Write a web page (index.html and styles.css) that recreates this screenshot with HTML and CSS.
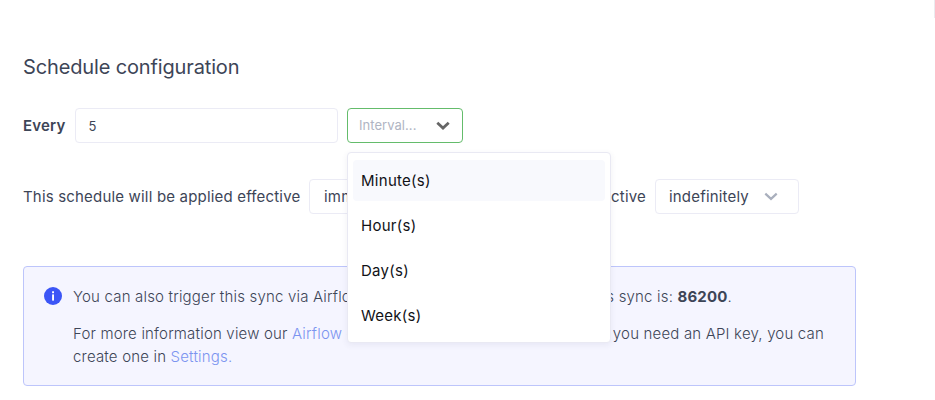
FILE: index.html
```html
<!DOCTYPE html>
<html lang="en">
<head>
    <meta charset="UTF-8">
    <meta name="viewport" content="width=device-width, initial-scale=1.0">
    <title>Schedule configuration</title>
    <link rel="stylesheet" href="styles.css">
</head>
<body>
    <div class="page-edge"></div>
    <main class="schedule">
        <h2 class="title">Schedule configuration</h2>

        <form class="row interval-row">
            <label class="every" for="every">Every</label>
            <input class="number-input" type="text" id="every" value="5">
            <div class="interval">
                <div class="select interval-select">
                    <span class="placeholder">Interval...</span>
                    <svg class="chevron" width="14" height="9" viewBox="0 0 14 9"><path d="M1.3 1.8 L7 7 L12.7 1.8" /></svg>
                </div>
                <!-- Opened dropdown -->
                <ul class="menu">
                    <li class="option active">Minute(s)</li>
                    <li class="option">Hour(s)</li>
                    <li class="option">Day(s)</li>
                    <li class="option">Week(s)</li>
                </ul>
            </div>
        </form>

        <div class="row effective-row">
            <span class="effective-text">This schedule will be applied effective</span>
            <div class="select effective-select">
                <span>immediately</span>
                <svg class="chevron" width="14" height="9" viewBox="0 0 14 9"><path d="M1.3 1.6 L7 6.9 L12.7 1.6" /></svg>
            </div>
            <span class="active-text">and will be active</span>
            <div class="select until-select">
                <span>indefinitely</span>
                <svg class="chevron" width="14" height="9" viewBox="0 0 14 9"><path d="M1.3 1.6 L7 6.9 L12.7 1.6" /></svg>
            </div>
        </div>

        <div class="callout">
            <svg class="info-icon" width="18" height="18" viewBox="0 0 18 18">
                <circle cx="9" cy="9" r="9" />
                <rect x="8.1" y="4.3" width="1.9" height="1.9" />
                <rect x="8.1" y="7.4" width="1.9" height="6.2" />
            </svg>
            <div class="callout-text">
                <p class="line first"><span>You can also trigger this sync via Airflow. The ID for</span><span>this sync is: <b>86200</b>.</span></p>
                <p class="line"><span>For more information view our <a href="#">Airflow docs</a>. If</span><span>you need an API key, you can</span></p>
                <p class="line last">create one in <a href="#">Settings.</a></p>
            </div>
        </div>
    </main>
</body>
</html>
```
FILE: styles.css
```css
* {
    box-sizing: border-box;
}

body {
    margin: 0;
    background-color: #fff;
    color: #3d4557;
    font-family: Inter, "Liberation Sans", sans-serif;
    font-size: 15px;
    letter-spacing: 0.18px;
}

/* Thin border of the panel on the right */
.page-edge {
    position: absolute;
    top: 0;
    right: 0;
    width: 1px;
    height: 18px;
    background-color: #ebebef;
}

.schedule {
    width: 856px;
    padding: 54px 0 0 23px;
}

.title {
    margin: 0;
    font-size: 20px;
    font-weight: 400;
    line-height: 26px;
    letter-spacing: -0.14px;
}

.row {
    display: flex;
    align-items: center;
    height: 35px;
}

.interval-row {
    margin-top: 28px;
}

.every {
    width: 51.5px;
    font-weight: 600;
}

.number-input {
    width: 263.5px;
    height: 35px;
    margin-right: 9px;
    padding: 0 13px;
    border: 1px solid #ebebf5;
    border-radius: 4px;
    color: #3d4557;
    font-family: inherit;
    font-size: 13px;
}

.interval {
    position: relative;
}

.select {
    display: flex;
    align-items: center;
    justify-content: space-between;
    height: 35px;
    border: 1px solid #ebebf5;
    border-radius: 4px;
}

.chevron path {
    fill: none;
    stroke: #a9afbd;
    stroke-width: 2.2;
}

.interval-select {
    width: 116px;
    padding: 0 12px 0 11px;
    border-color: #64bc6b;
}

.interval-select .chevron path {
    stroke: #666;
    stroke-width: 2.8;
}

.placeholder {
    padding-bottom: 1px;
    color: #b0b5c3;
    font-size: 13px;
    letter-spacing: 0.05px;
}

/* Dropdown menu */
.menu {
    position: absolute;
    top: 44px;
    left: 0;
    z-index: 1;
    width: 264px;
    height: 191px;
    margin: 0;
    padding: 7px 5px;
    list-style: none;
    background-color: #fff;
    border: 1px solid #e9e9f3;
    border-radius: 4px;
    box-shadow: 0 2px 6px rgba(60, 60, 110, 0.08);
}

.option {
    height: 41px;
    margin-bottom: 4px;
    padding-left: 8px;
    border-radius: 4px;
    color: #111217;
    line-height: 41px;
    letter-spacing: 0.28px;
}

.option.active {
    background-color: #f8f9fd;
}

.effective-row {
    margin-top: 36px;
    white-space: nowrap;
}

.effective-text {
    width: 286px;
}

.effective-select {
    width: 143px;
    padding: 0 19px 0 14px;
}

.active-text {
    flex: 1;
    margin-right: 9px;
    text-align: right;
}

.until-select {
    width: 144px;
    margin-right: 57px;
    padding: 0 20px 0 13px;
}

/* Info box */
.callout {
    display: flex;
    height: 120px;
    margin-top: 52px;
    padding: 18px 31px 0 20px;
    background-color: #f5f5ff;
    border: 1px solid #bdc5fb;
    border-radius: 4px;
    font-weight: 300;
}

.info-icon {
    flex: none;
    margin: 2px 11px 0 0;
    fill: #3b55f6;
}

.info-icon rect {
    fill: #fff;
}

.callout-text {
    flex: 1;
}

.line {
    display: flex;
    justify-content: space-between;
    margin: 0;
    line-height: 23px;
    white-space: nowrap;
}

.line.first {
    margin: 0 92px 14px 0;
}

.line.last {
    display: block;
}

.callout b {
    font-weight: 700;
}

.callout a {
    color: #7b94f0;
    text-decoration: none;
}
```
